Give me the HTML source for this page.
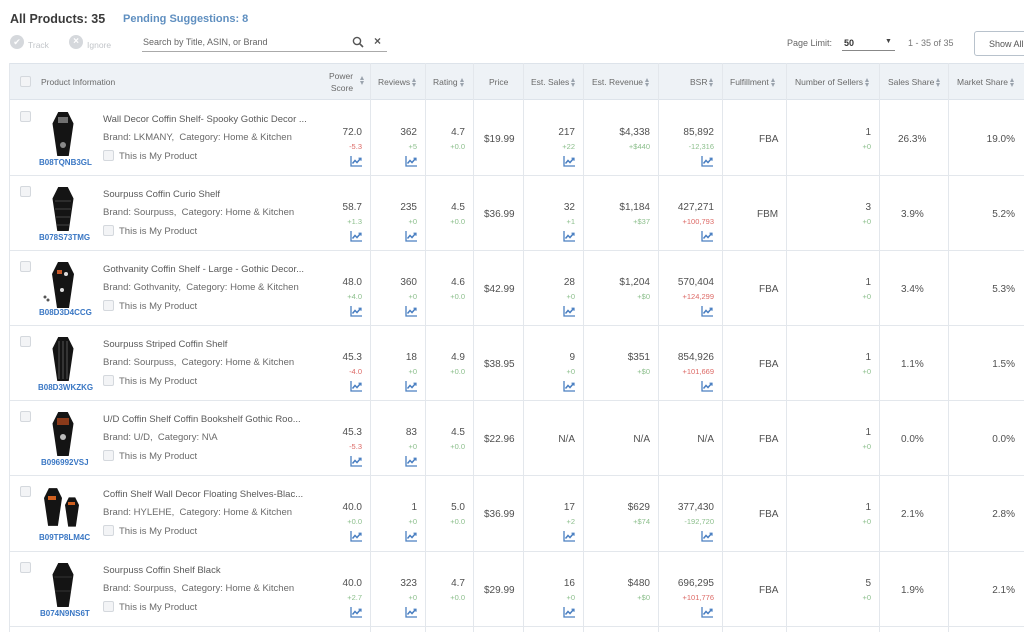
<!DOCTYPE html>
<html><head><meta charset="utf-8"><style>
*{box-sizing:border-box;margin:0;padding:0}
body{width:1024px;height:632px;overflow:hidden;background:#fff;font-family:"Liberation Sans",sans-serif;color:#555;position:relative}
.a{position:absolute;white-space:nowrap}
.hdr{position:absolute;left:9px;top:63px;width:1015px;height:37px;background:#eef2f6;border:1px solid #dde3ea;border-right:none}
.vl{position:absolute;top:63px;width:1px;height:569px;background:#e3e7ec}
.hl{position:absolute;left:9px;width:1015px;height:1px;background:#e3e7ec}
.h{position:absolute;font-size:8.5px;color:#6a6a6a;white-space:nowrap}
.cb{position:absolute;width:11px;height:11px;border:1px solid #d4d8dd;border-radius:2px;background:#f3f4f6}
.t{font-size:9.5px;color:#5a5a5a}
.b{font-size:9.5px;color:#6a6a6a}
.n{font-size:10px;color:#505050;text-align:right}
.d{font-size:7.5px;text-align:right}
.g{color:#8cbf8c}.r{color:#dd6a66}
.asin{font-size:8px;color:#3a77c4;font-weight:bold}
.s{display:inline-block;width:5px;height:9px;vertical-align:middle;margin-left:2px;position:relative}
.s:before{content:"";position:absolute;left:0;top:0;border-left:2.5px solid transparent;border-right:2.5px solid transparent;border-bottom:4px solid #9aa3ad}
.s:after{content:"";position:absolute;left:0;bottom:0;border-left:2.5px solid transparent;border-right:2.5px solid transparent;border-top:4px solid #9aa3ad}
</style></head><body>
<div class="a" style="left:10px;top:12px;font-size:12.5px;color:#3a3a3a;font-weight:bold">All Products: 35</div>
<div class="a" style="left:123px;top:13px;font-size:11px;color:#5f8fc0;font-weight:bold">Pending Suggestions: 8</div>
<div class="a" style="left:10px;top:35px;width:14px;height:14px;border-radius:50%;background:#d5d8dc;color:#fff;font-size:9px;text-align:center;line-height:14px">✔</div>
<div class="a" style="left:28px;top:40px;font-size:8.5px;color:#c2c5c9">Track</div>
<div class="a" style="left:69px;top:35px;width:14px;height:14px;border-radius:50%;background:#d5d8dc;color:#fff;font-size:10px;text-align:center;line-height:14px;font-weight:bold">×</div>
<div class="a" style="left:87px;top:40px;font-size:8.5px;color:#c2c5c9">Ignore</div>
<div class="a" style="left:143px;top:37px;font-size:9px;color:#666">Search by Title, ASIN, or Brand</div>
<div class="a" style="left:142px;top:51px;width:245px;height:1px;background:#aaa"></div>
<svg class="a" style="left:352px;top:36px" width="12" height="12" viewBox="0 0 12 12"><circle cx="5" cy="5" r="3.6" fill="none" stroke="#555" stroke-width="1.4"/><line x1="7.6" y1="7.6" x2="11" y2="11" stroke="#555" stroke-width="1.6"/></svg>
<div class="a" style="left:374px;top:34px;font-size:12px;color:#555;font-weight:bold">×</div>
<div class="a" style="left:787px;top:38px;font-size:9px;color:#666">Page Limit:</div>
<div class="a" style="left:844px;top:38px;font-size:9px;color:#333;font-weight:bold">50</div>
<div class="a" style="left:885px;top:38px;font-size:7px;color:#444">▼</div>
<div class="a" style="left:842px;top:50px;width:53px;height:1px;background:#888"></div>
<div class="a" style="left:908px;top:38px;font-size:9px;color:#777">1 - 35 of 35</div>
<div class="a" style="left:974px;top:31px;width:60px;height:25px;border:1px solid #b8c2cc;border-radius:3px;font-size:9px;color:#555;padding:7px 0 0 14px">Show All</div>

<div class="hdr"></div>
<div class="cb" style="left:20px;top:76px"></div>
<div class="h" style="left:41px;top:77px">Product Information</div>
<div class="h" style="left:329px;top:70px;text-align:right;line-height:12px">Power<br>Score</div><span class="s a" style="left:358px;top:72px"></span>
<div class="h" style="left:378px;top:77px">Reviews<span class="s"></span></div>
<div class="h" style="left:433px;top:77px">Rating<span class="s"></span></div>
<div class="h" style="left:489px;top:77px">Price</div>
<div class="h" style="left:531px;top:77px">Est. Sales<span class="s"></span></div>
<div class="h" style="left:592px;top:77px">Est. Revenue<span class="s"></span></div>
<div class="h" style="left:690px;top:77px">BSR<span class="s"></span></div>
<div class="h" style="left:730px;top:77px">Fulfillment<span class="s"></span></div>
<div class="h" style="left:795px;top:77px">Number of Sellers<span class="s"></span></div>
<div class="h" style="left:888px;top:77px">Sales Share<span class="s"></span></div>
<div class="h" style="left:957px;top:77px">Market Share<span class="s"></span></div>

<div class="vl" style="left:9px"></div>
<div class="vl" style="left:370px"></div><div class="vl" style="left:425px"></div><div class="vl" style="left:473px"></div><div class="vl" style="left:523px"></div><div class="vl" style="left:583px"></div><div class="vl" style="left:658px"></div><div class="vl" style="left:722px"></div><div class="vl" style="left:786px"></div><div class="vl" style="left:879px"></div><div class="vl" style="left:948px"></div>
<div class="hl" style="top:175px"></div><div class="hl" style="top:250px"></div><div class="hl" style="top:325px"></div><div class="hl" style="top:400px"></div><div class="hl" style="top:475px"></div><div class="hl" style="top:551px"></div><div class="hl" style="top:626px"></div>

<svg width="0" height="0" style="position:absolute"><defs>
<symbol id="ch" viewBox="0 0 12 11"><path d="M1 0V10H12" fill="none" stroke="#4a7fc1" stroke-width="1.3"/><path d="M2.5 7.5L5 4.5L7 6.5L10.5 2.5" fill="none" stroke="#4a7fc1" stroke-width="1.5"/><path d="M8.5 2.2H11V4.7" fill="none" stroke="#4a7fc1" stroke-width="1.2"/></symbol>
<symbol id="cf" viewBox="0 0 22 46"><polygon points="6,0 16,0 22,12 17,46 5,46 0,12" fill="#141414"/></symbol>
</defs></svg>

<div style="position:absolute;left:0;top:100px;width:1024px;height:75px">
<div class="cb" style="left:20px;top:11px"></div>
<svg class="a" style="left:52px;top:12px" width="22" height="44"><use href="#cf"/><rect x="6" y="5" width="10" height="6" fill="#ccc" opacity=".5"/><circle cx="11" cy="33" r="3" fill="#888"/></svg>
<div class="a asin" style="left:39px;top:58px">B08TQNB3GL</div>
<div class="a t" style="left:103px;top:14px">Wall Decor Coffin Shelf- Spooky Gothic Decor ...</div>
<div class="a b" style="left:103px;top:32px">Brand: LKMANY,&nbsp; Category: Home &amp; Kitchen</div>
<div class="cb" style="left:103px;top:50px"></div><div class="a b" style="left:119px;top:51px">This is My Product</div>
<div class="a n" style="right:662px;top:27px">72.0</div><div class="a d r" style="right:662px;top:42px">-5.3</div><svg class="a" style="left:350px;top:56px" width="12" height="11"><use href="#ch"/></svg>
<div class="a n" style="right:607px;top:27px">362</div><div class="a d g" style="right:607px;top:42px">+5</div><svg class="a" style="left:405px;top:56px" width="12" height="11"><use href="#ch"/></svg>
<div class="a n" style="right:559px;top:27px">4.7</div><div class="a d g" style="right:559px;top:42px">+0.0</div>
<div class="a n" style="left:484px;top:34px">$19.99</div>
<div class="a n" style="right:449px;top:27px">217</div><div class="a d g" style="right:449px;top:42px">+22</div><svg class="a" style="left:563px;top:56px" width="12" height="11"><use href="#ch"/></svg>
<div class="a n" style="right:374px;top:27px">$4,338</div><div class="a d g" style="right:374px;top:42px">+$440</div>
<div class="a n" style="right:310px;top:27px">85,892</div><div class="a d g" style="right:310px;top:42px">-12,316</div><svg class="a" style="left:701px;top:56px" width="12" height="11"><use href="#ch"/></svg>
<div class="a n" style="left:759px;top:34px">FBA</div>
<div class="a n" style="right:153px;top:27px">1</div><div class="a d g" style="right:153px;top:42px">+0</div>
<div class="a n" style="left:898px;top:34px">26.3%</div>
<div class="a n" style="right:9px;top:34px">19.0%</div>
</div>

<div style="position:absolute;left:0;top:175px;width:1024px;height:75px">
<div class="cb" style="left:20px;top:11px"></div>
<svg class="a" style="left:52px;top:12px" width="22" height="44"><use href="#cf"/><path d="M3 14H19M3 22H19M4 30H18M5 38H17" stroke="#444"/></svg>
<div class="a asin" style="left:39px;top:58px">B078S73TMG</div>
<div class="a t" style="left:103px;top:14px">Sourpuss Coffin Curio Shelf</div>
<div class="a b" style="left:103px;top:32px">Brand: Sourpuss,&nbsp; Category: Home &amp; Kitchen</div>
<div class="cb" style="left:103px;top:50px"></div><div class="a b" style="left:119px;top:51px">This is My Product</div>
<div class="a n" style="right:662px;top:27px">58.7</div><div class="a d g" style="right:662px;top:42px">+1.3</div><svg class="a" style="left:350px;top:56px" width="12" height="11"><use href="#ch"/></svg>
<div class="a n" style="right:607px;top:27px">235</div><div class="a d g" style="right:607px;top:42px">+0</div><svg class="a" style="left:405px;top:56px" width="12" height="11"><use href="#ch"/></svg>
<div class="a n" style="right:559px;top:27px">4.5</div><div class="a d g" style="right:559px;top:42px">+0.0</div>
<div class="a n" style="left:484px;top:34px">$36.99</div>
<div class="a n" style="right:449px;top:27px">32</div><div class="a d g" style="right:449px;top:42px">+1</div><svg class="a" style="left:563px;top:56px" width="12" height="11"><use href="#ch"/></svg>
<div class="a n" style="right:374px;top:27px">$1,184</div><div class="a d g" style="right:374px;top:42px">+$37</div>
<div class="a n" style="right:310px;top:27px">427,271</div><div class="a d r" style="right:310px;top:42px">+100,793</div><svg class="a" style="left:701px;top:56px" width="12" height="11"><use href="#ch"/></svg>
<div class="a n" style="left:757px;top:34px">FBM</div>
<div class="a n" style="right:153px;top:27px">3</div><div class="a d g" style="right:153px;top:42px">+0</div>
<div class="a n" style="left:901px;top:34px">3.9%</div>
<div class="a n" style="right:9px;top:34px">5.2%</div>
</div>

<div style="position:absolute;left:0;top:250px;width:1024px;height:75px">
<div class="cb" style="left:20px;top:11px"></div>
<svg class="a" style="left:42px;top:12px" width="32" height="46"><g transform="translate(10,0)"><use href="#cf" width="22" height="46"/><rect x="5" y="8" width="5" height="4" fill="#c85a2a"/><circle cx="14" cy="12" r="2" fill="#ddd"/><circle cx="10" cy="28" r="2" fill="#ddd"/></g><circle cx="3" cy="35" r="1.5" fill="#555"/><circle cx="6" cy="38" r="1.5" fill="#555"/></svg>
<div class="a asin" style="left:39px;top:58px">B08D3D4CCG</div>
<div class="a t" style="left:103px;top:14px">Gothvanity Coffin Shelf - Large - Gothic Decor...</div>
<div class="a b" style="left:103px;top:32px">Brand: Gothvanity,&nbsp; Category: Home &amp; Kitchen</div>
<div class="cb" style="left:103px;top:50px"></div><div class="a b" style="left:119px;top:51px">This is My Product</div>
<div class="a n" style="right:662px;top:27px">48.0</div><div class="a d g" style="right:662px;top:42px">+4.0</div><svg class="a" style="left:350px;top:56px" width="12" height="11"><use href="#ch"/></svg>
<div class="a n" style="right:607px;top:27px">360</div><div class="a d g" style="right:607px;top:42px">+0</div><svg class="a" style="left:405px;top:56px" width="12" height="11"><use href="#ch"/></svg>
<div class="a n" style="right:559px;top:27px">4.6</div><div class="a d g" style="right:559px;top:42px">+0.0</div>
<div class="a n" style="left:484px;top:34px">$42.99</div>
<div class="a n" style="right:449px;top:27px">28</div><div class="a d g" style="right:449px;top:42px">+0</div><svg class="a" style="left:563px;top:56px" width="12" height="11"><use href="#ch"/></svg>
<div class="a n" style="right:374px;top:27px">$1,204</div><div class="a d g" style="right:374px;top:42px">+$0</div>
<div class="a n" style="right:310px;top:27px">570,404</div><div class="a d r" style="right:310px;top:42px">+124,299</div><svg class="a" style="left:701px;top:56px" width="12" height="11"><use href="#ch"/></svg>
<div class="a n" style="left:759px;top:34px">FBA</div>
<div class="a n" style="right:153px;top:27px">1</div><div class="a d g" style="right:153px;top:42px">+0</div>
<div class="a n" style="left:901px;top:34px">3.4%</div>
<div class="a n" style="right:9px;top:34px">5.3%</div>
</div>

<div style="position:absolute;left:0;top:325px;width:1024px;height:75px">
<div class="cb" style="left:20px;top:11px"></div>
<svg class="a" style="left:52px;top:12px" width="22" height="44"><use href="#cf"/><path d="M7 4V42M11 4V42M15 4V42" stroke="#555"/></svg>
<div class="a asin" style="left:38px;top:58px">B08D3WKZKG</div>
<div class="a t" style="left:103px;top:14px">Sourpuss Striped Coffin Shelf</div>
<div class="a b" style="left:103px;top:32px">Brand: Sourpuss,&nbsp; Category: Home &amp; Kitchen</div>
<div class="cb" style="left:103px;top:50px"></div><div class="a b" style="left:119px;top:51px">This is My Product</div>
<div class="a n" style="right:662px;top:27px">45.3</div><div class="a d r" style="right:662px;top:42px">-4.0</div><svg class="a" style="left:350px;top:56px" width="12" height="11"><use href="#ch"/></svg>
<div class="a n" style="right:607px;top:27px">18</div><div class="a d g" style="right:607px;top:42px">+0</div><svg class="a" style="left:405px;top:56px" width="12" height="11"><use href="#ch"/></svg>
<div class="a n" style="right:559px;top:27px">4.9</div><div class="a d g" style="right:559px;top:42px">+0.0</div>
<div class="a n" style="left:484px;top:34px">$38.95</div>
<div class="a n" style="right:449px;top:27px">9</div><div class="a d g" style="right:449px;top:42px">+0</div><svg class="a" style="left:563px;top:56px" width="12" height="11"><use href="#ch"/></svg>
<div class="a n" style="right:374px;top:27px">$351</div><div class="a d g" style="right:374px;top:42px">+$0</div>
<div class="a n" style="right:310px;top:27px">854,926</div><div class="a d r" style="right:310px;top:42px">+101,669</div><svg class="a" style="left:701px;top:56px" width="12" height="11"><use href="#ch"/></svg>
<div class="a n" style="left:759px;top:34px">FBA</div>
<div class="a n" style="right:153px;top:27px">1</div><div class="a d g" style="right:153px;top:42px">+0</div>
<div class="a n" style="left:901px;top:34px">1.1%</div>
<div class="a n" style="right:9px;top:34px">1.5%</div>
</div>

<div style="position:absolute;left:0;top:400px;width:1024px;height:75px">
<div class="cb" style="left:20px;top:11px"></div>
<svg class="a" style="left:52px;top:12px" width="22" height="44"><use href="#cf"/><rect x="5" y="6" width="12" height="7" fill="#8a3a1a"/><circle cx="11" cy="25" r="3" fill="#bbb"/></svg>
<div class="a asin" style="left:41px;top:58px">B096992VSJ</div>
<div class="a t" style="left:103px;top:14px">U/D Coffin Shelf Coffin Bookshelf Gothic Roo...</div>
<div class="a b" style="left:103px;top:32px">Brand: U/D,&nbsp; Category: N\A</div>
<div class="cb" style="left:103px;top:50px"></div><div class="a b" style="left:119px;top:51px">This is My Product</div>
<div class="a n" style="right:662px;top:27px">45.3</div><div class="a d r" style="right:662px;top:42px">-5.3</div><svg class="a" style="left:350px;top:56px" width="12" height="11"><use href="#ch"/></svg>
<div class="a n" style="right:607px;top:27px">83</div><div class="a d g" style="right:607px;top:42px">+0</div><svg class="a" style="left:405px;top:56px" width="12" height="11"><use href="#ch"/></svg>
<div class="a n" style="right:559px;top:27px">4.5</div><div class="a d g" style="right:559px;top:42px">+0.0</div>
<div class="a n" style="left:484px;top:34px">$22.96</div>
<div class="a n" style="right:449px;top:34px">N/A</div>
<div class="a n" style="right:374px;top:34px">N/A</div>
<div class="a n" style="right:310px;top:34px">N/A</div>
<div class="a n" style="left:759px;top:34px">FBA</div>
<div class="a n" style="right:153px;top:27px">1</div><div class="a d g" style="right:153px;top:42px">+0</div>
<div class="a n" style="left:901px;top:34px">0.0%</div>
<div class="a n" style="right:9px;top:34px">0.0%</div>
</div>

<div style="position:absolute;left:0;top:475px;width:1024px;height:76px">
<div class="cb" style="left:20px;top:11px"></div>
<svg class="a" style="left:44px;top:12px" width="40" height="44"><use href="#cf" x="0" y="0" width="18" height="40"/><use href="#cf" x="21" y="10" width="14" height="30"/><rect x="4" y="9" width="8" height="4" fill="#d06020"/><rect x="24" y="15" width="7" height="3" fill="#d06020"/></svg>
<div class="a asin" style="left:39px;top:58px">B09TP8LM4C</div>
<div class="a t" style="left:103px;top:14px">Coffin Shelf Wall Decor Floating Shelves-Blac...</div>
<div class="a b" style="left:103px;top:32px">Brand: HYLEHE,&nbsp; Category: Home &amp; Kitchen</div>
<div class="cb" style="left:103px;top:50px"></div><div class="a b" style="left:119px;top:51px">This is My Product</div>
<div class="a n" style="right:662px;top:27px">40.0</div><div class="a d g" style="right:662px;top:42px">+0.0</div><svg class="a" style="left:350px;top:56px" width="12" height="11"><use href="#ch"/></svg>
<div class="a n" style="right:607px;top:27px">1</div><div class="a d g" style="right:607px;top:42px">+0</div><svg class="a" style="left:405px;top:56px" width="12" height="11"><use href="#ch"/></svg>
<div class="a n" style="right:559px;top:27px">5.0</div><div class="a d g" style="right:559px;top:42px">+0.0</div>
<div class="a n" style="left:484px;top:34px">$36.99</div>
<div class="a n" style="right:449px;top:27px">17</div><div class="a d g" style="right:449px;top:42px">+2</div><svg class="a" style="left:563px;top:56px" width="12" height="11"><use href="#ch"/></svg>
<div class="a n" style="right:374px;top:27px">$629</div><div class="a d g" style="right:374px;top:42px">+$74</div>
<div class="a n" style="right:310px;top:27px">377,430</div><div class="a d g" style="right:310px;top:42px">-192,720</div><svg class="a" style="left:701px;top:56px" width="12" height="11"><use href="#ch"/></svg>
<div class="a n" style="left:759px;top:34px">FBA</div>
<div class="a n" style="right:153px;top:27px">1</div><div class="a d g" style="right:153px;top:42px">+0</div>
<div class="a n" style="left:901px;top:34px">2.1%</div>
<div class="a n" style="right:9px;top:34px">2.8%</div>
</div>

<div style="position:absolute;left:0;top:551px;width:1024px;height:75px">
<div class="cb" style="left:20px;top:11px"></div>
<svg class="a" style="left:52px;top:12px" width="22" height="44"><use href="#cf"/><path d="M2 14H20M3 28H19" stroke="#333"/></svg>
<div class="a asin" style="left:40px;top:58px">B074N9NS6T</div>
<div class="a t" style="left:103px;top:14px">Sourpuss Coffin Shelf Black</div>
<div class="a b" style="left:103px;top:32px">Brand: Sourpuss,&nbsp; Category: Home &amp; Kitchen</div>
<div class="cb" style="left:103px;top:50px"></div><div class="a b" style="left:119px;top:51px">This is My Product</div>
<div class="a n" style="right:662px;top:27px">40.0</div><div class="a d g" style="right:662px;top:42px">+2.7</div><svg class="a" style="left:350px;top:56px" width="12" height="11"><use href="#ch"/></svg>
<div class="a n" style="right:607px;top:27px">323</div><div class="a d g" style="right:607px;top:42px">+0</div><svg class="a" style="left:405px;top:56px" width="12" height="11"><use href="#ch"/></svg>
<div class="a n" style="right:559px;top:27px">4.7</div><div class="a d g" style="right:559px;top:42px">+0.0</div>
<div class="a n" style="left:484px;top:34px">$29.99</div>
<div class="a n" style="right:449px;top:27px">16</div><div class="a d g" style="right:449px;top:42px">+0</div><svg class="a" style="left:563px;top:56px" width="12" height="11"><use href="#ch"/></svg>
<div class="a n" style="right:374px;top:27px">$480</div><div class="a d g" style="right:374px;top:42px">+$0</div>
<div class="a n" style="right:310px;top:27px">696,295</div><div class="a d r" style="right:310px;top:42px">+101,776</div><svg class="a" style="left:701px;top:56px" width="12" height="11"><use href="#ch"/></svg>
<div class="a n" style="left:759px;top:34px">FBA</div>
<div class="a n" style="right:153px;top:27px">5</div><div class="a d g" style="right:153px;top:42px">+0</div>
<div class="a n" style="left:901px;top:34px">1.9%</div>
<div class="a n" style="right:9px;top:34px">2.1%</div>
</div>
</body></html>
